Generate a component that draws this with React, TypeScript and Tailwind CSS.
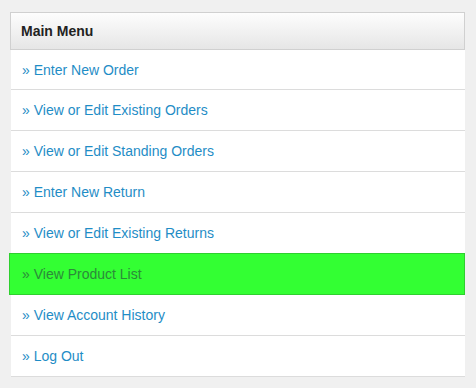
import React from 'react';

const items = [
  'Enter New Order',
  'View or Edit Existing Orders',
  'View or Edit Standing Orders',
  'Enter New Return',
  'View or Edit Existing Returns',
  'View Product List',
  'View Account History',
  'Log Out',
];

const ACTIVE = 'View Product List';

const App: React.FC = () => {
  return (
    <div className="min-h-[388px] w-[476px] bg-[#f0f0f0] pt-[12px] pl-[10px] font-['Liberation_Sans',Arial,sans-serif] text-[14px]">
      <div className="w-[455px]">
        <div className="h-[38px] border border-[#d0d0d0] bg-gradient-to-b from-[#fdfdfd] to-[#e6e6e6] px-[10px] pt-px flex items-center font-bold text-[#222]">
          Main Menu
        </div>
        <ul className="ml-px w-[454px]">
          {items.map((label, i) => {
            const active = label === ACTIVE;
            if (active) {
              return (
                <li
                  key={label}
                  className="-mt-px -ml-[2px] w-[456px] h-[42px] bg-[#33ff33] border border-[#2fcf2f] pl-[12px] pt-px flex items-center text-[#2c8a3a]"
                >
                  » {label}
                </li>
              );
            }
            return (
              <li
                key={label}
                className={`${i === 0 ? 'h-[40px]' : 'h-[41px]'} bg-white border-b border-[#dcdcdc] pl-[11px] pt-px flex items-center text-[#1f8dc6]`}
              >
                » {label}
              </li>
            );
          })}
        </ul>
      </div>
    </div>
  );
};

export default App;
